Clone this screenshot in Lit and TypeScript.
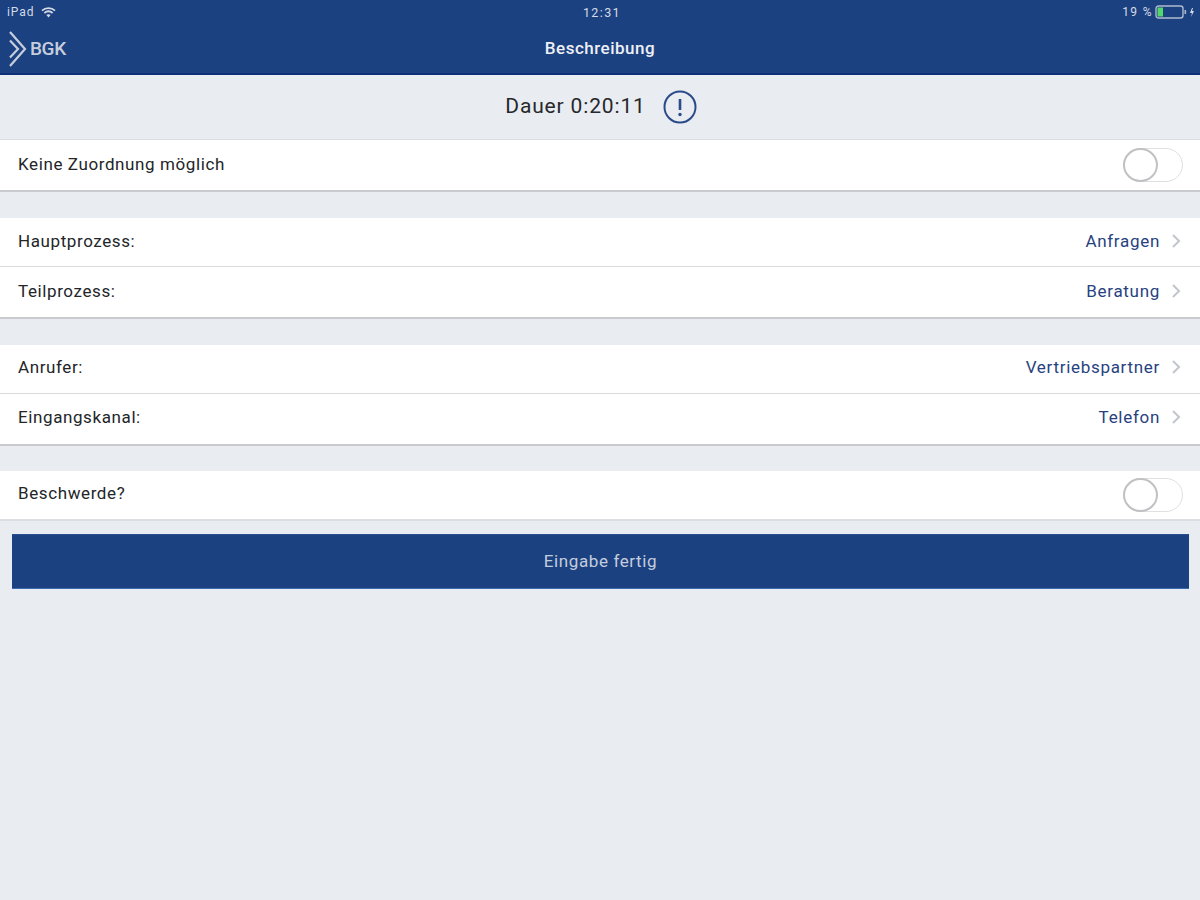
import { LitElement, html, css } from "lit";
import { customElement } from "lit/decorators.js";

const chevron = html`<svg class="chev" width="10" height="16" viewBox="0 0 10 16"><path d="M2 2l6 6-6 6" fill="none" stroke="#c2c5ca" stroke-width="2"/></svg>`;

@customElement("app-root")
export class AppRoot extends LitElement {
  static styles = css`
    :host { display: block; width: 1200px; height: 900px; background: #e9ecf1; font-family: Roboto, "Liberation Sans", sans-serif; color: #26282c; overflow: hidden; }
    .header { height: 73px; background: #1c4180; border-bottom: 2px solid #0f2f78; color: #fff; display: flex; flex-direction: column; }
    .status { height: 24px; display: grid; grid-template-columns: 1fr auto 1fr; align-items: center; padding: 0 5px 0 7px; font-size: 12px; color: #d5dbe6; letter-spacing: .95px; }
    .status-l { display: flex; align-items: center; gap: 6px; }
    .status-r { display: flex; align-items: center; justify-content: flex-end; gap: 2px; }
    .clock { font-size: 12.5px; letter-spacing: 1.4px; padding-left: 2px; }
    .pct { letter-spacing: 1.4px; }
    .nav { flex: 1; display: grid; grid-template-columns: 1fr auto 1fr; align-items: center; padding: 0 8px 0 9px; }
    .brand { display: flex; align-items: center; gap: 3px; font-size: 19px; font-weight: 500; letter-spacing: -.4px; color: #c6cedd; }
    .title { font-size: 17px; font-weight: 500; color: #eef0f5; letter-spacing: .5px; margin: 0 1px 2px 0; }
    .duration { height: 65px; display: flex; align-items: center; justify-content: center; gap: 17px; font-size: 21px; letter-spacing: .85px; padding-left: 2px; border-bottom: 1px solid #d9dce2; box-sizing: border-box; }
    .duration span { margin-bottom: 2px; }
    .group { background: #fff; border-bottom: 2px solid #c8cacd; margin-bottom: 26px; --lift: 2px; }
    .group.tight { margin-bottom: 25px; --lift: 4px; }
    .group.last { margin-bottom: 13px; border-bottom-color: #dcdee2; --lift: 4px; }
    .row { display: flex; align-items: center; justify-content: space-between; padding: 0 19px 0 18px; font-size: 17px; letter-spacing: .6px; color: #232528; }
    .row > span { margin-bottom: var(--lift); }
    .row.toggled { padding-right: 17px; }
    .row + .row { border-top: 1px solid #d9dadc; }
    .h50 { height: 50px; }
    .h48 { height: 48px; }
    .val { display: flex; align-items: center; gap: 11px; color: #27427f; letter-spacing: .7px; }
    .chev { display: block; }
    .toggle { width: 60px; height: 34px; border-radius: 17px; border: 1px solid #dfe0e2; position: relative; background: #fff; box-sizing: border-box; }
    .knob { position: absolute; left: -1px; top: -1px; width: 35px; height: 34px; border-radius: 50%; border: 2px solid #c0c1c3; background: #fff; box-sizing: border-box; }
    .btn { margin: 0 11px 0 12px; height: 55px; padding-bottom: 2px; background: #1c4180; border-bottom: 1px solid #3a6ab0; border-top: 1px solid #2a4f90; box-sizing: border-box; color: #c4cddd; display: flex; align-items: center; justify-content: center; font-size: 17px; letter-spacing: .6px; }
  `;

  private row(label: string, value: string, cls: string) {
    return html`<div class="row ${cls}"><span>${label}</span><span class="val">${value}${chevron}</span></div>`;
  }
  private toggleRow(label: string, cls: string) {
    return html`<div class="row toggled ${cls}"><span>${label}</span><div class="toggle"><div class="knob"></div></div></div>`;
  }

  render() {
    return html`
      <div class="header">
        <div class="status">
          <div class="status-l"><span>iPad</span>
            <svg width="15" height="11" viewBox="0 0 15 11"><g fill="none" stroke="#d5dbe6" stroke-width="1.8"><path d="M1 3.6C4.6.4 10.4.4 14 3.6"/><path d="M3.4 6C5.8 4 9.2 4 11.6 6"/></g><path d="M5.4 8C6.6 7 8.4 7 9.6 8L7.5 10.6z" fill="#d5dbe6"/></svg>
          </div>
          <span class="clock">12:31</span>
          <div class="status-r"><span class="pct">19 %</span>
            <svg width="40" height="14" viewBox="0 0 40 14">
              <rect x="1" y="1" width="27" height="12" rx="2.5" fill="none" stroke="#aeb9cf" stroke-width="1.4"/>
              <rect x="2.5" y="2.5" width="5.5" height="9" fill="#55d66b"/>
              <rect x="29.5" y="5" width="1.6" height="4" fill="#aeb9cf"/>
              <path d="M37 3l-2 5h2l-1 4 3-6h-2l1-3z" fill="#d5dbe6"/>
            </svg>
          </div>
        </div>
        <div class="nav">
          <div class="brand">
            <svg width="18" height="36" viewBox="0 0 18 36"><g fill="none" stroke="#c6cedd" stroke-width="2.2"><path d="M1 1l15 17L1 35"/><path d="M1 9.5l8 8.5-8 8.5"/></g></svg>
            <span>BGK</span>
          </div>
          <span class="title">Beschreibung</span>
          <span></span>
        </div>
      </div>
      <div class="duration">
        <span>Dauer 0:20:11</span>
        <svg width="34" height="34" viewBox="0 0 34 34"><circle cx="17" cy="17" r="15.5" fill="none" stroke="#2b4a8a" stroke-width="2"/><path d="M17 9v11" stroke="#2b4a8a" stroke-width="2.6"/><circle cx="17" cy="24.5" r="1.7" fill="#2b4a8a"/></svg>
      </div>
      <div class="group">${this.toggleRow("Keine Zuordnung möglich", "h50")}</div>
      <div class="group">
        ${this.row("Hauptprozess:", "Anfragen", "h48")}
        ${this.row("Teilprozess:", "Beratung", "h50")}
      </div>
      <div class="group tight">
        ${this.row("Anrufer:", "Vertriebspartner", "h48")}
        ${this.row("Eingangskanal:", "Telefon", "h50")}
      </div>
      <div class="group last">${this.toggleRow("Beschwerde?", "h48")}</div>
      <div class="btn">Eingabe fertig</div>
    `;
  }
}
